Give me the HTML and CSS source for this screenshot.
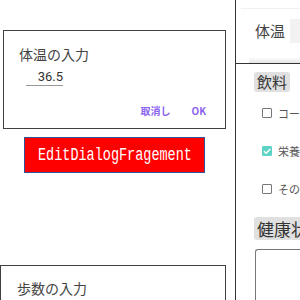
FILE: index.html
```html
<!DOCTYPE html>
<html lang="ja">
<head>
  <meta charset="UTF-8" />
  <title>EditDialogFragement</title>
  <link rel="stylesheet" href="styles.css">
</head>
<body>
  <div class="left">
    <div class="dialog first">
      <div class="dlg-title">体温の入力</div>
      <div class="dlg-input">36.5</div>
      <div class="dlg-buttons">
        <span class="btn">取消し</span>
        <span class="btn">OK</span>
      </div>
    </div>

    <div class="label"><span>EditDialogFragement</span></div>

    <div class="dialog second">
      <div class="dlg-title">歩数の入力</div>
    </div>
  </div>

  <div class="phone">
    <div class="appbar">
      <div class="topline"></div>
      <div class="app-row">
        <span class="app-title">体温</span>
        <span class="app-field"></span>
      </div>
      <div class="shadow"></div>
    </div>
    <div class="content">
      <div class="chip">飲料</div>
      <div class="check"><span class="box"></span><span>コーヒー</span></div>
      <div class="check"><span class="box on"><svg width="10" height="10" viewBox="0 0 10 10"><path d="M2 5.2 L4.2 7.3 L8.2 3" fill="none" stroke="#fff" stroke-width="1.4"/></svg></span><span>栄養ドリンク</span></div>
      <div class="check"><span class="box"></span><span>その他</span></div>
      <div class="chip big">健康状態</div>
      <div class="memo"></div>
    </div>
  </div>
</body>
</html>
```

FILE: styles.css
```css
body {
  margin: 0;
  width: 300px;
  height: 300px;
  overflow: hidden;
  display: flex;
  background: white;
  font-family: Roboto, "Noto Sans CJK JP", sans-serif;
  color: #444;
}
.left {
  width: 235px;
  flex: none;
}
.dialog {
  border: 1px solid #404040;
  background: white;
}
.first {
  margin: 30px 0 0 3px;
  width: 221px;
  height: 97px;
}
.second {
  margin: 92px 0 0 0;
  width: 224px;
  height: 60px;
}
.dlg-title {
  font-family: "Noto Sans CJK JP", sans-serif;
  font-size: 14px;
  line-height: 20px;
  padding: 13px 0 0 15px;
  color: #444;
}
.second .dlg-title {
  padding: 12px 0 0 16px;
}
.dlg-input {
  margin: 5px 0 0 22px;
  width: 37px;
  font-size: 13px;
  line-height: 16px;
  text-align: right;
  border-bottom: 1px solid #999;
  color: #333;
}
.dlg-buttons {
  display: flex;
  justify-content: flex-end;
  gap: 21px;
  margin-top: 18px;
  padding-right: 19px;
}
.btn {
  font-family: "Noto Sans CJK JP", sans-serif;
  font-size: 10px;
  line-height: 14px;
  font-weight: bold;
  color: #8b63f0;
}
.label {
  margin: 8px 0 0 24px;
  width: 166px;
  height: 34px;
  padding-left: 13px;
  border: 1px solid #2f5597;
  background: #ff0000;
  overflow: hidden;
}
.label span {
  display: inline-block;
  color: white;
  font-family: "Liberation Mono", monospace;
  font-size: 18px;
  line-height: 34px;
  white-space: nowrap;
  transform: scaleX(0.75);
  transform-origin: left center;
}
.phone {
  flex: 1;
  border-left: 1px solid #333;
  overflow: hidden;
}
.appbar {
  height: 55px;
  padding-top: 8px;
  border-bottom: 1px solid #333;
}
.topline {
  margin-left: 5px;
  height: 1px;
  background: #f0f0f0;
}
.app-row {
  display: flex;
  align-items: center;
  gap: 5px;
  padding: 10px 0 0 19px;
}
.app-title {
  font-family: "Noto Sans CJK JP", sans-serif;
  font-size: 15px;
  line-height: 24px;
  color: #444;
}
.app-field {
  flex: 1;
  height: 24px;
  background: #f2f2f2;
}
.shadow {
  margin: 14px 0 0 13px;
  height: 6px;
  background: linear-gradient(#fff, #e4e4e4);
}
.content {
  padding: 8px 0 0 18px;
  white-space: nowrap;
}
.chip {
  width: fit-content;
  font-family: "Noto Sans CJK JP", sans-serif;
  font-size: 15px;
  line-height: 20px;
  padding: 0 3px;
  background: #e0e0e0;
  border-radius: 3px;
  color: #333;
}
.chip.big {
  font-size: 17px;
  line-height: 23px;
  margin-top: 23px;
}
.check {
  display: flex;
  align-items: center;
  gap: 6px;
  font-family: "Noto Sans CJK JP", sans-serif;
  font-size: 11px;
  color: #555;
  margin: 16px 0 0 8px;
  height: 10px;
}
.check + .check {
  margin-top: 28px;
}
.box {
  flex: none;
  width: 8px;
  height: 8px;
  border: 1px solid #777;
  border-radius: 1px;
  display: flex;
}
.box.on {
  background: #5fd3c5;
  border-color: #5fd3c5;
}
.box svg {
  margin: -1px;
}
.memo {
  margin: 9px 0 0 1px;
  height: 60px;
  border: 1px solid #777;
  border-right: none;
  border-radius: 3px 0 0 0;
}
```
